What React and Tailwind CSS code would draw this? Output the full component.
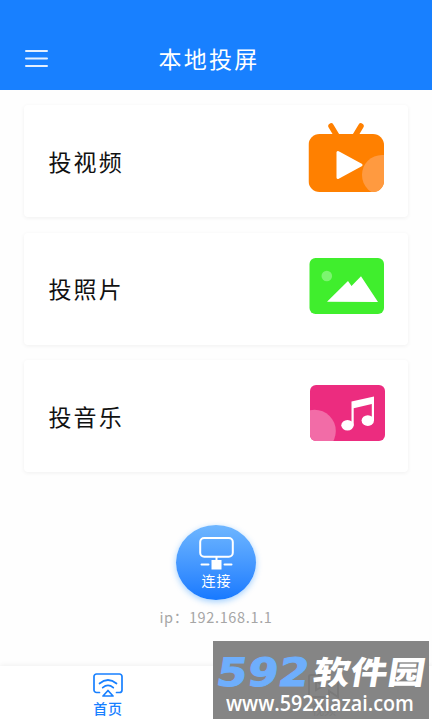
import React from 'react'

function VideoIcon() {
  return (
    <svg className="w-19 h-[70px]" viewBox="0 0 76 70" fill="none">
      <defs>
        <clipPath id="tv">
          <rect x="0.5" y="12" width="75.5" height="58" rx="11" />
        </clipPath>
      </defs>
      <path d="M23 4l6 10M53 4l-6 10" stroke="#ff8000" strokeWidth="5.5" strokeLinecap="round" />
      <g clipPath="url(#tv)">
        <rect x="0.5" y="12" width="75.5" height="58" fill="#ff8000" />
        <ellipse cx="74" cy="53" rx="20" ry="20" fill="#ff9a40" />
      </g>
      <path d="M30 30.5v25L53 43z" fill="#fff" stroke="#fff" strokeWidth="3" strokeLinejoin="round" />
    </svg>
  )
}

function PhotoIcon() {
  return (
    <svg className="w-[75px] h-14" viewBox="0 0 75 56">
      <rect x="0.5" width="74.5" height="56" rx="6" fill="#40ee2d" />
      <circle cx="17.8" cy="18" r="5.3" fill="#7cf570" />
      <path d="M18 43.7L39 23l3.5 5L52 18.3 69 44z" fill="#fff" />
    </svg>
  )
}

function MusicIcon() {
  return (
    <svg className="w-[75px] h-14" viewBox="0 0 75 56">
      <defs>
        <clipPath id="music">
          <rect width="75" height="56" rx="6" />
        </clipPath>
      </defs>
      <g clipPath="url(#music)">
        <rect width="75" height="56" fill="#ec2c7f" />
        <circle cx="4.5" cy="46" r="21.3" fill="#f26ca7" />
      </g>
      <path d="M41.5 16.5l22.5-5v24h-2.2V19L43.7 23.3v17h-2.2z" fill="#fff" />
      <ellipse cx="37.5" cy="40.3" rx="6.2" ry="5.3" fill="#fff" />
      <ellipse cx="57.8" cy="35.6" rx="6.2" ry="5.3" fill="#fff" />
    </svg>
  )
}

const cards = [
  { label: '投视频', Icon: VideoIcon, iconClass: 'mt-[17px]' },
  { label: '投照片', Icon: PhotoIcon, iconClass: 'mt-[25.5px]' },
  { label: '投音乐', Icon: MusicIcon, iconClass: 'mt-[25.4px] -mr-[0.5px]' },
]

function CastCard({ label, Icon, iconClass }) {
  return (
    <div className="flex h-28 items-start justify-between rounded-sm bg-white pl-[24.5px] pr-6 shadow-[0_1px_4px_rgba(0,0,0,0.06)]">
      <span className="mt-[37.5px] text-[23px] leading-9 tracking-[2.1px] text-[#111]">{label}</span>
      <div className={iconClass}>
        <Icon />
      </div>
    </div>
  )
}

function Watermark() {
  return (
    <div className="absolute left-[213px] top-[641px] h-[78px] w-[216px] overflow-hidden bg-[#858585]">
      <svg className="absolute left-[94px] top-[32px] h-[34px] w-[36px]" viewBox="0 0 36 34" fill="none" stroke="#7a7a7a" strokeWidth="2">
        <path d="M22 14V4a2 2 0 0 0-2-2H4a2 2 0 0 0-2 2v18a2 2 0 0 0 2 2h16a2 2 0 0 0 2-2v-4l9 6V8l-9 6M9 8v9l7-4z" />
      </svg>
      <span className="absolute left-[99px] top-[60px] text-[12px] leading-[17px] text-[#7b7b7b]">视频</span>
      <span className="absolute left-[4px] top-[12px] origin-left -skew-x-8 scale-x-112 font-['DejaVu_Sans'] text-[39px] font-bold leading-10 tracking-[0.5px] text-[#6eaefc] [-webkit-text-stroke:1px_#6eaefc]">
        592
      </span>
      <span className="absolute left-[101px] top-[7px] origin-left -skew-x-8 scale-x-115 text-[32px] font-black leading-[44px] tracking-[0.5px] text-white">
        软件园
      </span>
      <span className="absolute left-[13px] top-[46px] origin-left scale-x-94 font-['Open_Sans'] text-[21px] font-semibold leading-8 text-white">
        www.592xiazai.com
      </span>
    </div>
  )
}

export default function App() {
  return (
    <div className="relative flex h-[720px] w-[432px] flex-col overflow-hidden bg-[#fefefe] font-['Noto_Sans_CJK_SC',sans-serif]">
      <header className="relative h-[90px] shrink-0 bg-[#1880ff] pt-10 text-center">
        <svg className="absolute left-[25px] top-[49px] h-[19px] w-[23px]" viewBox="0 0 23 19" stroke="#e3efff" strokeWidth="2" strokeLinecap="round">
          <path d="M1 2h21M1 9.6h21M1 17h21" />
        </svg>
        <h1 className="pr-[14px] text-[23px] leading-9 tracking-[2.3px] text-white">本地投屏</h1>
      </header>

      <main className="flex flex-1 flex-col px-6 pt-[15px]">
        <div className="flex flex-col gap-[15.5px]">
          {cards.map((card) => (
            <CastCard key={card.label} {...card} />
          ))}
        </div>

        <div className="mt-[53px] flex flex-col items-center">
          <button className="flex h-[75px] w-20 flex-col items-center rounded-[50%] bg-linear-to-b from-[#6eb6ff] to-[#1679ff] pt-3 text-white shadow-[0_2px_6px_rgba(24,140,255,0.4)]">
            <svg className="h-[33px] w-[35px] shrink-0" viewBox="0 0 35 33" fill="none" stroke="#fff" strokeWidth="2">
              <rect x="1.2" y="1" width="32.6" height="18.8" rx="4" />
              <path d="M17.5 20v5M2.5 27.5h7M25.5 27.5h7" strokeLinecap="round" />
              <rect x="12.5" y="23" width="10" height="9.5" fill="#fff" stroke="none" />
            </svg>
            <span className="pl-px text-[14px] leading-5 tracking-[1px]">连接</span>
          </button>
          <p className="mt-[5.5px] text-[14.5px] leading-[22px] tracking-[0.65px] text-[#a6a6a6]">ip：192.168.1.1</p>
        </div>
      </main>

      <nav className="grid h-[54px] shrink-0 grid-cols-2 bg-white shadow-[0_-1px_5px_rgba(0,0,0,0.06)]">
        <div className="flex flex-col items-center pt-[7px] text-[#1880ff]">
          <svg className="h-6 w-[30px]" viewBox="0 0 30 24" fill="none" stroke="currentColor" strokeWidth="1.7" strokeLinecap="round" strokeLinejoin="round">
            <path d="M6.5 19.5H3.5A2.5 2.5 0 0 1 1 17V3.5A2.5 2.5 0 0 1 3.5 1h23A2.5 2.5 0 0 1 29 3.5V17a2.5 2.5 0 0 1-2.5 2.5h-3" />
            <path d="M6.5 10.5q8.5-7 17 0M9.7 14.7q5.3-4.5 10.6 0M15 17.5L10 23h10z" />
          </svg>
          <span className="mt-px text-[14px] font-medium leading-5 tracking-[0.8px]">首页</span>
        </div>
      </nav>

      <Watermark />
    </div>
  )
}
